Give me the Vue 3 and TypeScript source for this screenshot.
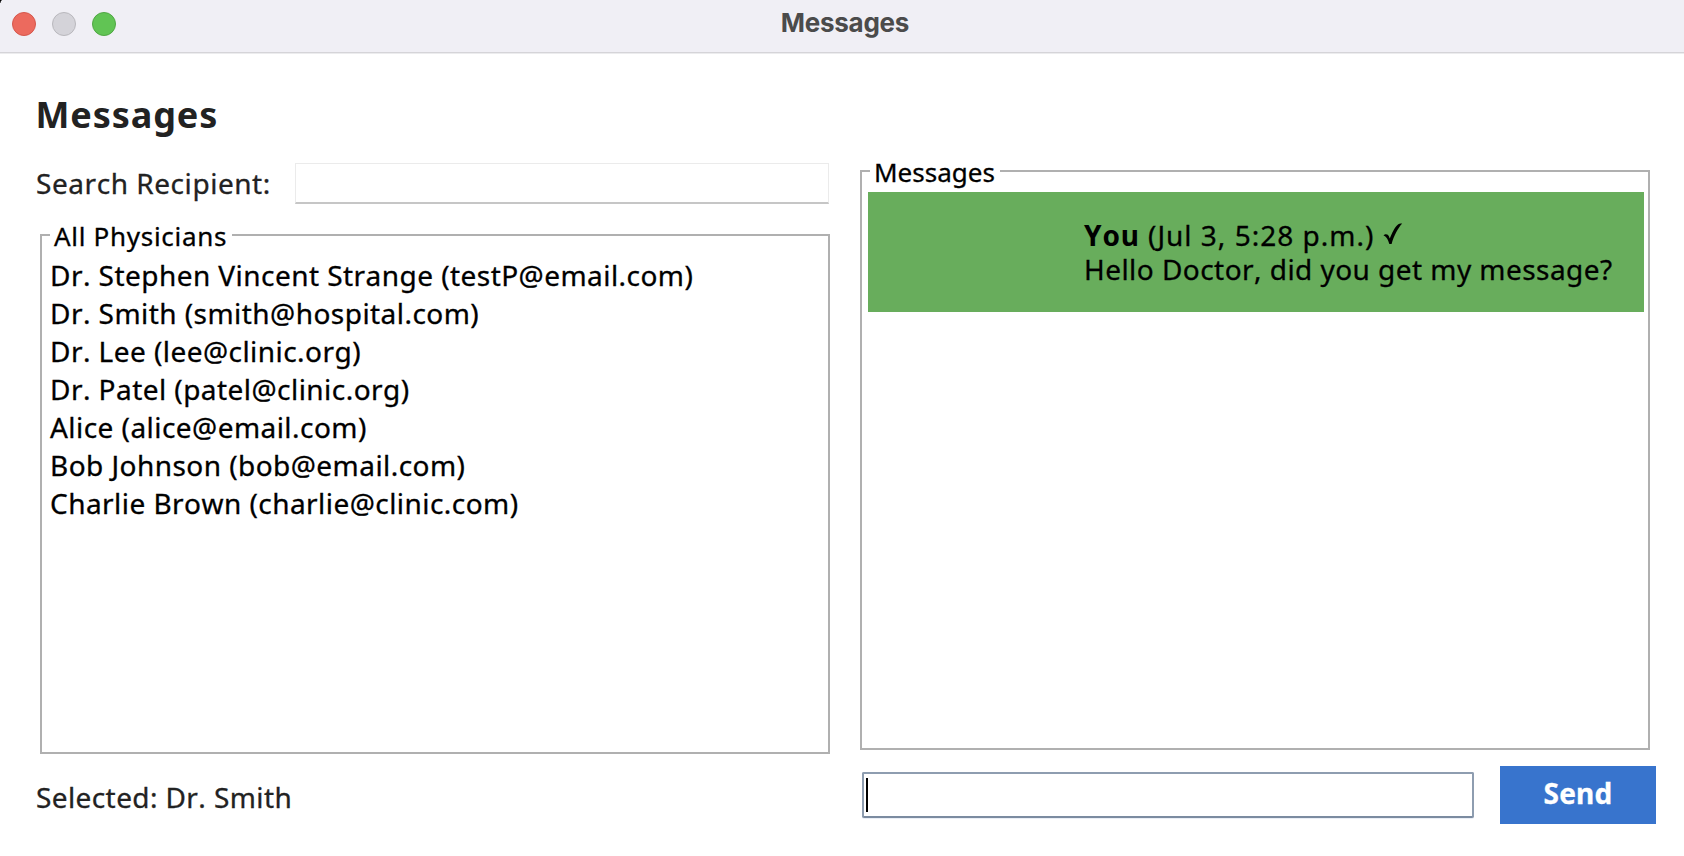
<script setup lang="ts">
import { ref } from 'vue'

interface Contact {
  name: string
  email: string
}

const contacts: Contact[] = [
  { name: 'Dr. Stephen Vincent Strange', email: 'testP@email.com' },
  { name: 'Dr. Smith', email: 'smith@hospital.com' },
  { name: 'Dr. Lee', email: 'lee@clinic.org' },
  { name: 'Dr. Patel', email: 'patel@clinic.org' },
  { name: 'Alice', email: 'alice@email.com' },
  { name: 'Bob Johnson', email: 'bob@email.com' },
  { name: 'Charlie Brown', email: 'charlie@clinic.com' },
]

const selected = ref('Dr. Smith')
const query = ref('')
</script>

<template>
  <div class="window">
    <header class="titlebar">
      <div class="lights">
        <span class="light close"></span>
        <span class="light minimize"></span>
        <span class="light zoom"></span>
      </div>
      <span class="window-title">Messages</span>
      <span class="corner"></span>
    </header>

    <main class="content">
      <section class="left">
        <h1>Messages</h1>
        <div class="search">
          <label for="search">Search Recipient:</label>
          <input id="search" v-model="query" type="text" />
        </div>
        <div class="group contacts">
          <div class="group-top"><span class="legend">All Physicians</span></div>
          <ul>
            <li v-for="c in contacts" :key="c.email" @click="selected = c.name">
              {{ c.name }} ({{ c.email }})
            </li>
          </ul>
        </div>
        <p class="selected">Selected: {{ selected }}</p>
      </section>

      <section class="right">
        <div class="group thread">
          <div class="group-top"><span class="legend">Messages</span></div>
          <div class="message">
            <div class="bubble">
              <div class="meta">
                <b>You</b><span class="time">(Jul 3, 5:28 p.m.)</span>
                <svg class="check" width="20" height="22" viewBox="0 0 20 22">
                  <path d="M0.500 12.500C1.500 11.200 3.500 10.700 4.800 11.800C5.700 12.600 6.200 14 6.800 15.600C9 10 11.600 4.600 14.200 2.200C15.600 0.900 17.200 0.600 19.200 0.600C15 5.200 11 12.500 8.600 21L6.400 21C5.200 17.400 3.800 13.600 0.500 12.500Z" />
                </svg>
              </div>
              <div class="body">Hello Doctor, did you get my message?</div>
            </div>
          </div>
        </div>
        <div class="composer">
          <div class="field"><span class="caret"></span></div>
          <button type="button">Send</button>
        </div>
      </section>
    </main>
  </div>
</template>

<style>
body {
  margin: 0;
  background: #fff;
}
</style>

<style scoped>
.window {
  width: 1684px;
  height: 856px;
  overflow: hidden;
  display: flex;
  flex-direction: column;
  background: #fff;
  color: #000;
  font: 400 28px/38px "Noto Sans", "Open Sans", sans-serif;
  font-kerning: none;
  letter-spacing: 0.45px;
  -webkit-text-stroke: 0.3px;
}
.titlebar {
  position: relative;
  box-sizing: border-box;
  height: 54px;
  flex: none;
  display: grid;
  grid-template-columns: 1fr auto 1fr;
  background: #f0eff5;
  border-bottom: 1px solid #ececee;
  box-shadow: inset 0 -1px #d5d4d8;
}
.corner {
  position: absolute;
  left: 0;
  top: 0;
  width: 4px;
  height: 3px;
  background: radial-gradient(circle at 100% 100%, transparent 3px, #000 4px);
}
.lights {
  display: flex;
  gap: 16px;
  padding: 12px 0 0 12px;
}
.light {
  box-sizing: border-box;
  width: 24px;
  height: 24px;
  border-radius: 50%;
  border: 1px solid;
}
.close {
  background: #ec6a5e;
  border-color: #d5574c;
}
.minimize {
  background: #d4d3d9;
  border-color: #b9b8bd;
}
.zoom {
  background: #61c454;
  border-color: #50a744;
}
.window-title {
  padding: 7px 0 0 6px;
  font: 700 26px/32px Inter, sans-serif;
  letter-spacing: -0.26px;
  color: #4b4b4b;
  -webkit-text-stroke: 0;
}
.content {
  flex: 1;
  display: flex;
}
.left {
  width: 860px;
  display: flex;
  flex-direction: column;
}
h1 {
  margin: 37px 0 0 35.500px;
  font-size: 36px;
  line-height: 48px;
  letter-spacing: 0.9px;
  color: #222;
  -webkit-text-stroke: 0;
}
.search {
  display: flex;
  align-items: center;
  height: 41px;
  margin: 24px 0 0 36px;
  color: #222;
}
.search label {
  width: 259px;
  margin-top: -2px;
  letter-spacing: 0.55px;
}
.search input {
  box-sizing: border-box;
  width: 534px;
  height: 41px;
  padding: 0 8px;
  border: 1px solid #ebebeb;
  border-bottom: 2px solid #c6c6c6;
  outline: none;
  font: inherit;
}
.group {
  box-sizing: border-box;
  width: 790px;
  border: 2px solid #b0b0b0;
  border-top: 0;
}
.group-top {
  display: flex;
  height: 2px;
  margin: 0 -2px;
}
.group-top::before,
.group-top::after {
  content: "";
  height: 2px;
  background: #b0b0b0;
}
.group-top::before {
  width: 10px;
}
.group-top::after {
  flex: 1;
}
.legend {
  box-sizing: border-box;
  height: 32px;
  margin-top: -14px;
  padding-left: 4px;
  font-size: 26px;
  line-height: 32px;
  white-space: nowrap;
}
.contacts {
  height: 520px;
  margin: 30px 0 0 40px;
}
.contacts .legend {
  width: 182px;
  letter-spacing: 0.7px;
}
ul {
  margin: 20px 0 0 8px;
  padding: 0;
  list-style: none;
}
li {
  height: 38px;
  white-space: nowrap;
}
.selected {
  margin: 24px 0 0 36px;
  color: #222;
  letter-spacing: 0.4px;
}
.right {
  padding-top: 116px;
}
.thread {
  height: 580px;
}
.thread .legend {
  width: 130px;
  letter-spacing: 0;
}
.message {
  display: flex;
  justify-content: flex-end;
  box-sizing: border-box;
  width: 776px;
  height: 120px;
  margin: 20px 0 0 6px;
  padding-top: 26px;
  background: #68ad5c;
}
.bubble {
  width: 560px;
  line-height: 34px;
}
.meta {
  display: flex;
}
.meta b {
  width: 62px;
  letter-spacing: 0.9px;
  -webkit-text-stroke: 0;
}
.time {
  width: 226px;
  margin-left: 2px;
  white-space: nowrap;
  letter-spacing: 1px;
}
.check {
  margin: 5px 0 0 9px;
  fill: #000;
}
.composer {
  display: flex;
  align-items: flex-start;
  padding: 16px 0 0 2px;
}
.field {
  box-sizing: border-box;
  width: 612px;
  height: 46px;
  margin: 6px 26px 0 0;
  padding: 4px 2px;
  border: 2px solid #8e9db0;
  border-bottom-color: #7b8ba0;
  border-radius: 2px;
  box-shadow: 0 1px #e9eef6;
}
.caret {
  display: block;
  width: 2px;
  height: 34px;
  background: #000;
}
button {
  width: 156px;
  height: 58px;
  padding: 0 0 4px;
  border: 0;
  background: #3874cd;
  color: #fff;
  font: inherit;
  font-weight: 700;
  letter-spacing: 0.2px;
}
</style>
